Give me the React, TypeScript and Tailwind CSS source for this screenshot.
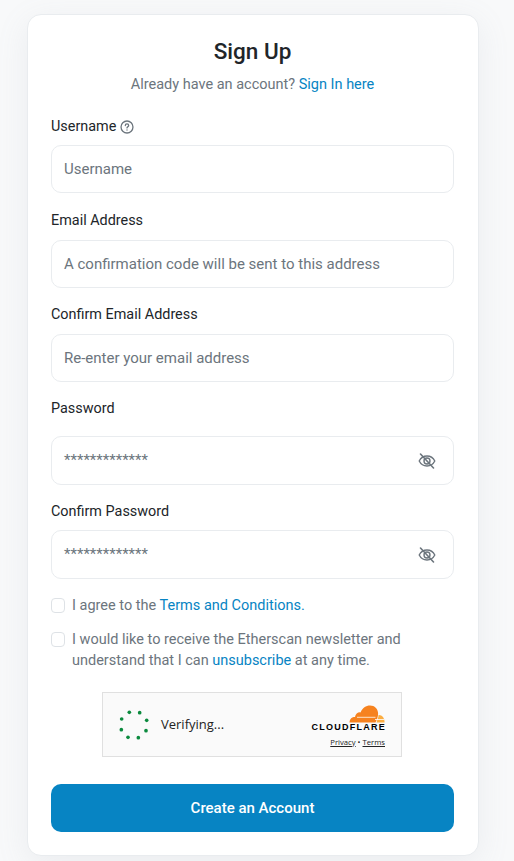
import type { ReactNode } from 'react'

function EyeSlash() {
  return (
    <svg width="18" height="16" viewBox="0 0 18 16" fill="none" stroke="#6c757d" strokeWidth="1.400" strokeLinecap="round" strokeLinejoin="round" className="shrink-0">
      <path d="M1.2 8C2.8 4.9 5.6 3 9 3s6.2 1.900 7.800 5c-1.600 3.100-4.400 5-7.800 5S2.800 11.100 1.200 8Z" />
      <circle cx="9" cy="8" r="3" />
      <path d="M2.500 1 15.500 15" strokeWidth="1.600" />
    </svg>
  )
}

function HelpIcon() {
  return (
    <svg width="14" height="14" viewBox="0 0 15 15" fill="none" stroke="#6c757d" strokeWidth="1.400" strokeLinecap="round" className="shrink-0">
      <circle cx="7.500" cy="7.500" r="6.400" />
      <path d="M5.700 5.900c0-1 .8-1.700 1.800-1.700s1.800.7 1.800 1.600c0 1.300-1.800 1.400-1.800 2.700" />
      <path d="M7.500 10.700v.1" strokeWidth="1.500" />
    </svg>
  )
}

function Spinner() {
  const dots = [
    [118, 97], [149, 98], [170, 121], [168, 152], [145, 173], [114, 172], [94, 149], [95, 117],
  ]
  return (
    <svg width="32" height="32" viewBox="84 87 96 96" className="shrink-0">
      {dots.map(([x, y]) => (
        <circle key={x} cx={x} cy={y} r="5.500" fill="#0b8a3e" />
      ))}
    </svg>
  )
}

function CloudIcon() {
  return (
    <svg width="36" height="18" viewBox="0 0 36 18" className="block">
      <path d="M0.500 17.500C0.600 13.800 3 12 6 12c.6-3.400 3-5 5.600-4.600C13.300 3 17 .500 21 .500c4.800 0 7.700 3.200 8.100 7.500.2 3-1 6.500-2.600 9.500Z" fill="#f6821f" />
      <path d="M27.500 17.500c.9-2.800 1.900-4.800 2.100-7.500 3.500-.2 6 3 6 7.500Z" fill="#fbad41" />
      <path d="M8 12.300h18.500" stroke="#fde3c8" strokeWidth="1" />
      <path d="M26 14.500h9" stroke="#fff" strokeWidth="0.800" />
    </svg>
  )
}

function Field({ label, placeholder, icon, extra, className, inputClass }: {
  label: string
  placeholder: string
  icon?: ReactNode
  extra?: ReactNode
  className?: string
  inputClass?: string
}) {
  return (
    <div className={className}>
      <div className="flex h-[21px] items-center gap-[4px] text-[14.4px] text-[#212529]">
        {label}
        {extra}
      </div>
      <div className={`flex items-center justify-between rounded-[10px] border border-[#e9ecef] bg-white pl-[12px] pr-[17px] ${inputClass}`}>
        <span className="text-[15px] text-[#6c757d]">{placeholder}</span>
        {icon}
      </div>
    </div>
  )
}

export default function App() {
  return (
    <div className="h-[861px] overflow-hidden bg-[#f8f9fa] px-[27px] pt-[14px] font-['Roboto',sans-serif]">
      <div className="h-[842px] w-[452px] rounded-[14px] border border-[#e9ecef] bg-white pl-[23px] pr-[24px] shadow-[0_8px_32px_rgba(140,152,164,0.12)]">
        <h1 className="mt-[20px] text-center text-[22.5px] font-medium leading-[32px] text-[#212529]">Sign Up</h1>
        <p className="mt-[7px] text-center text-[14.5px] leading-[22px] text-[#6c757d]">
          Already have an account? <span className="text-[#0784c3]">Sign In here</span>
        </p>

        <Field label="Username" placeholder="Username" extra={<HelpIcon />} className="mt-[20px]" inputClass="mt-[8px] h-[48px]" />
        <Field label="Email Address" placeholder="A confirmation code will be sent to this address" className="mt-[17px]" inputClass="mt-[9px] h-[48px]" />
        <Field label="Confirm Email Address" placeholder="Re-enter your email address" className="mt-[16px]" inputClass="mt-[9px] h-[48px]" />
        <Field label="Password" placeholder="*************" icon={<EyeSlash />} className="mt-[16px]" inputClass="mt-[17px] h-[49px]" />
        <Field label="Confirm Password" placeholder="*************" icon={<EyeSlash />} className="mt-[16px]" inputClass="mt-[8px] h-[49px]" />

        <div className="mt-[16px] flex items-start gap-[7px] text-[14.5px] leading-[21px] text-[#6c757d]">
          <span className="mt-[3px] h-[15px] w-[14px] shrink-0 rounded-[4px] border border-[#dee2e6] bg-white" />
          <p>I agree to the <span className="text-[#0784c3]">Terms and Conditions.</span></p>
        </div>
        <div className="mt-[13px] flex items-start gap-[7px] text-[14.5px] leading-[21px] text-[#6c757d]">
          <span className="mt-[3px] h-[15px] w-[14px] shrink-0 rounded-[4px] border border-[#dee2e6] bg-white" />
          <p>
            I would like to receive the Etherscan newsletter and<br />
            understand that I can <span className="text-[#0784c3]">unsubscribe</span> at any time.
          </p>
        </div>

        <div className="ml-[51px] mt-[21px] flex h-[65px] w-[300px] items-center justify-between border border-[#e0e0e0] bg-[#fafafa] pl-[15px] pr-[16px]">
          <div className="flex items-center gap-[11px] font-['Open_Sans',sans-serif] text-[13px] text-[#232323]">
            <Spinner />
            Verifying...
          </div>
          <div className="flex flex-col items-end pt-[2px]">
            <CloudIcon />
            <span className="-mr-[1px] font-['Liberation_Sans',sans-serif] text-[9px] font-bold leading-[9px] tracking-[1.25px] text-black">CLOUDFLARE</span>
            <span className="mt-[5px] font-['Open_Sans',sans-serif] text-[7.7px] leading-[10px] text-[#232323]">
              <span className="underline">Privacy</span> • <span className="underline">Terms</span>
            </span>
          </div>
        </div>

        <button className="mt-[27px] flex h-[48px] w-full items-center justify-center rounded-[10px] bg-[#0784c3] text-[15px] font-medium text-white">
          Create an Account
        </button>
      </div>
    </div>
  )
}
